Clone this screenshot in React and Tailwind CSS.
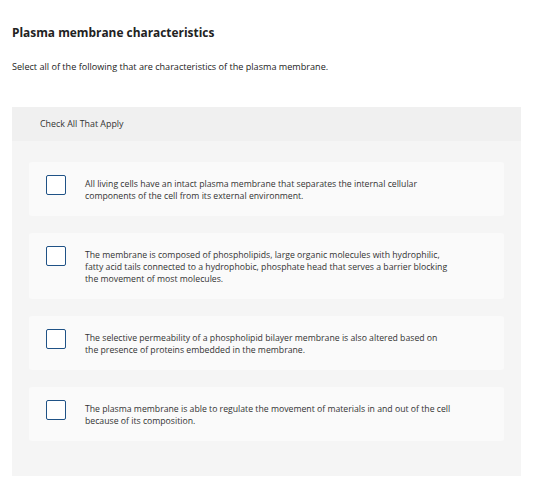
const options = [
    [
        'All living cells have an intact plasma membrane that separates the internal cellular',
        'components of the cell from its external environment.',
    ],
    [
        'The membrane is composed of phospholipids, large organic molecules with hydrophilic,',
        'fatty acid tails connected to a hydrophobic, phosphate head that serves a barrier blocking',
        'the movement of most molecules.',
    ],
    [
        'The selective permeability of a phospholipid bilayer membrane is also altered based on',
        'the presence of proteins embedded in the membrane.',
    ],
    [
        'The plasma membrane is able to regulate the movement of materials in and out of the cell',
        'because of its composition.',
    ],
];

export default function App() {
    return (
        <div className="min-h-[492px] bg-white pl-3 pt-[25px] text-[#333]" style={{ fontFamily: '"Open Sans", "Liberation Sans", sans-serif' }}>
            <h1 className="text-[11.9px] leading-[14px] font-bold text-[#222]">Plasma membrane characteristics</h1>
            <p className="mt-[22px] text-[9.1px] leading-[12px] text-[#222]">
                Select all of the following that are characteristics of the plasma membrane.
            </p>

            <div className="mt-[34px] w-[509px] bg-[#f5f5f5] pb-[35px]">
                <div className="flex h-[34px] items-center bg-[#f0f0f0] pl-[28px] text-[8.9px] text-[#333]">
                    Check All That Apply
                </div>
                <div className="flex flex-col gap-[17px] px-[17px] pt-[21px]">
                    {options.map((lines, i) => (
                        <label key={i} className="flex items-start rounded-[3px] bg-[#fafafa] pl-[17px] pb-[14px]">
                            <span className="mt-[13px] h-[20px] w-[20px] shrink-0 rounded-[2px] border-[1.5px] border-[#1f5286] bg-white" />
                            <span className="ml-[19px] pt-[16px] text-[8.7px] leading-[12px] text-[#333]">
                                {lines.map((l, j) => (
                                    <span key={j} className="block whitespace-nowrap">{l}</span>
                                ))}
                            </span>
                        </label>
                    ))}
                </div>
            </div>
        </div>
    );
}
